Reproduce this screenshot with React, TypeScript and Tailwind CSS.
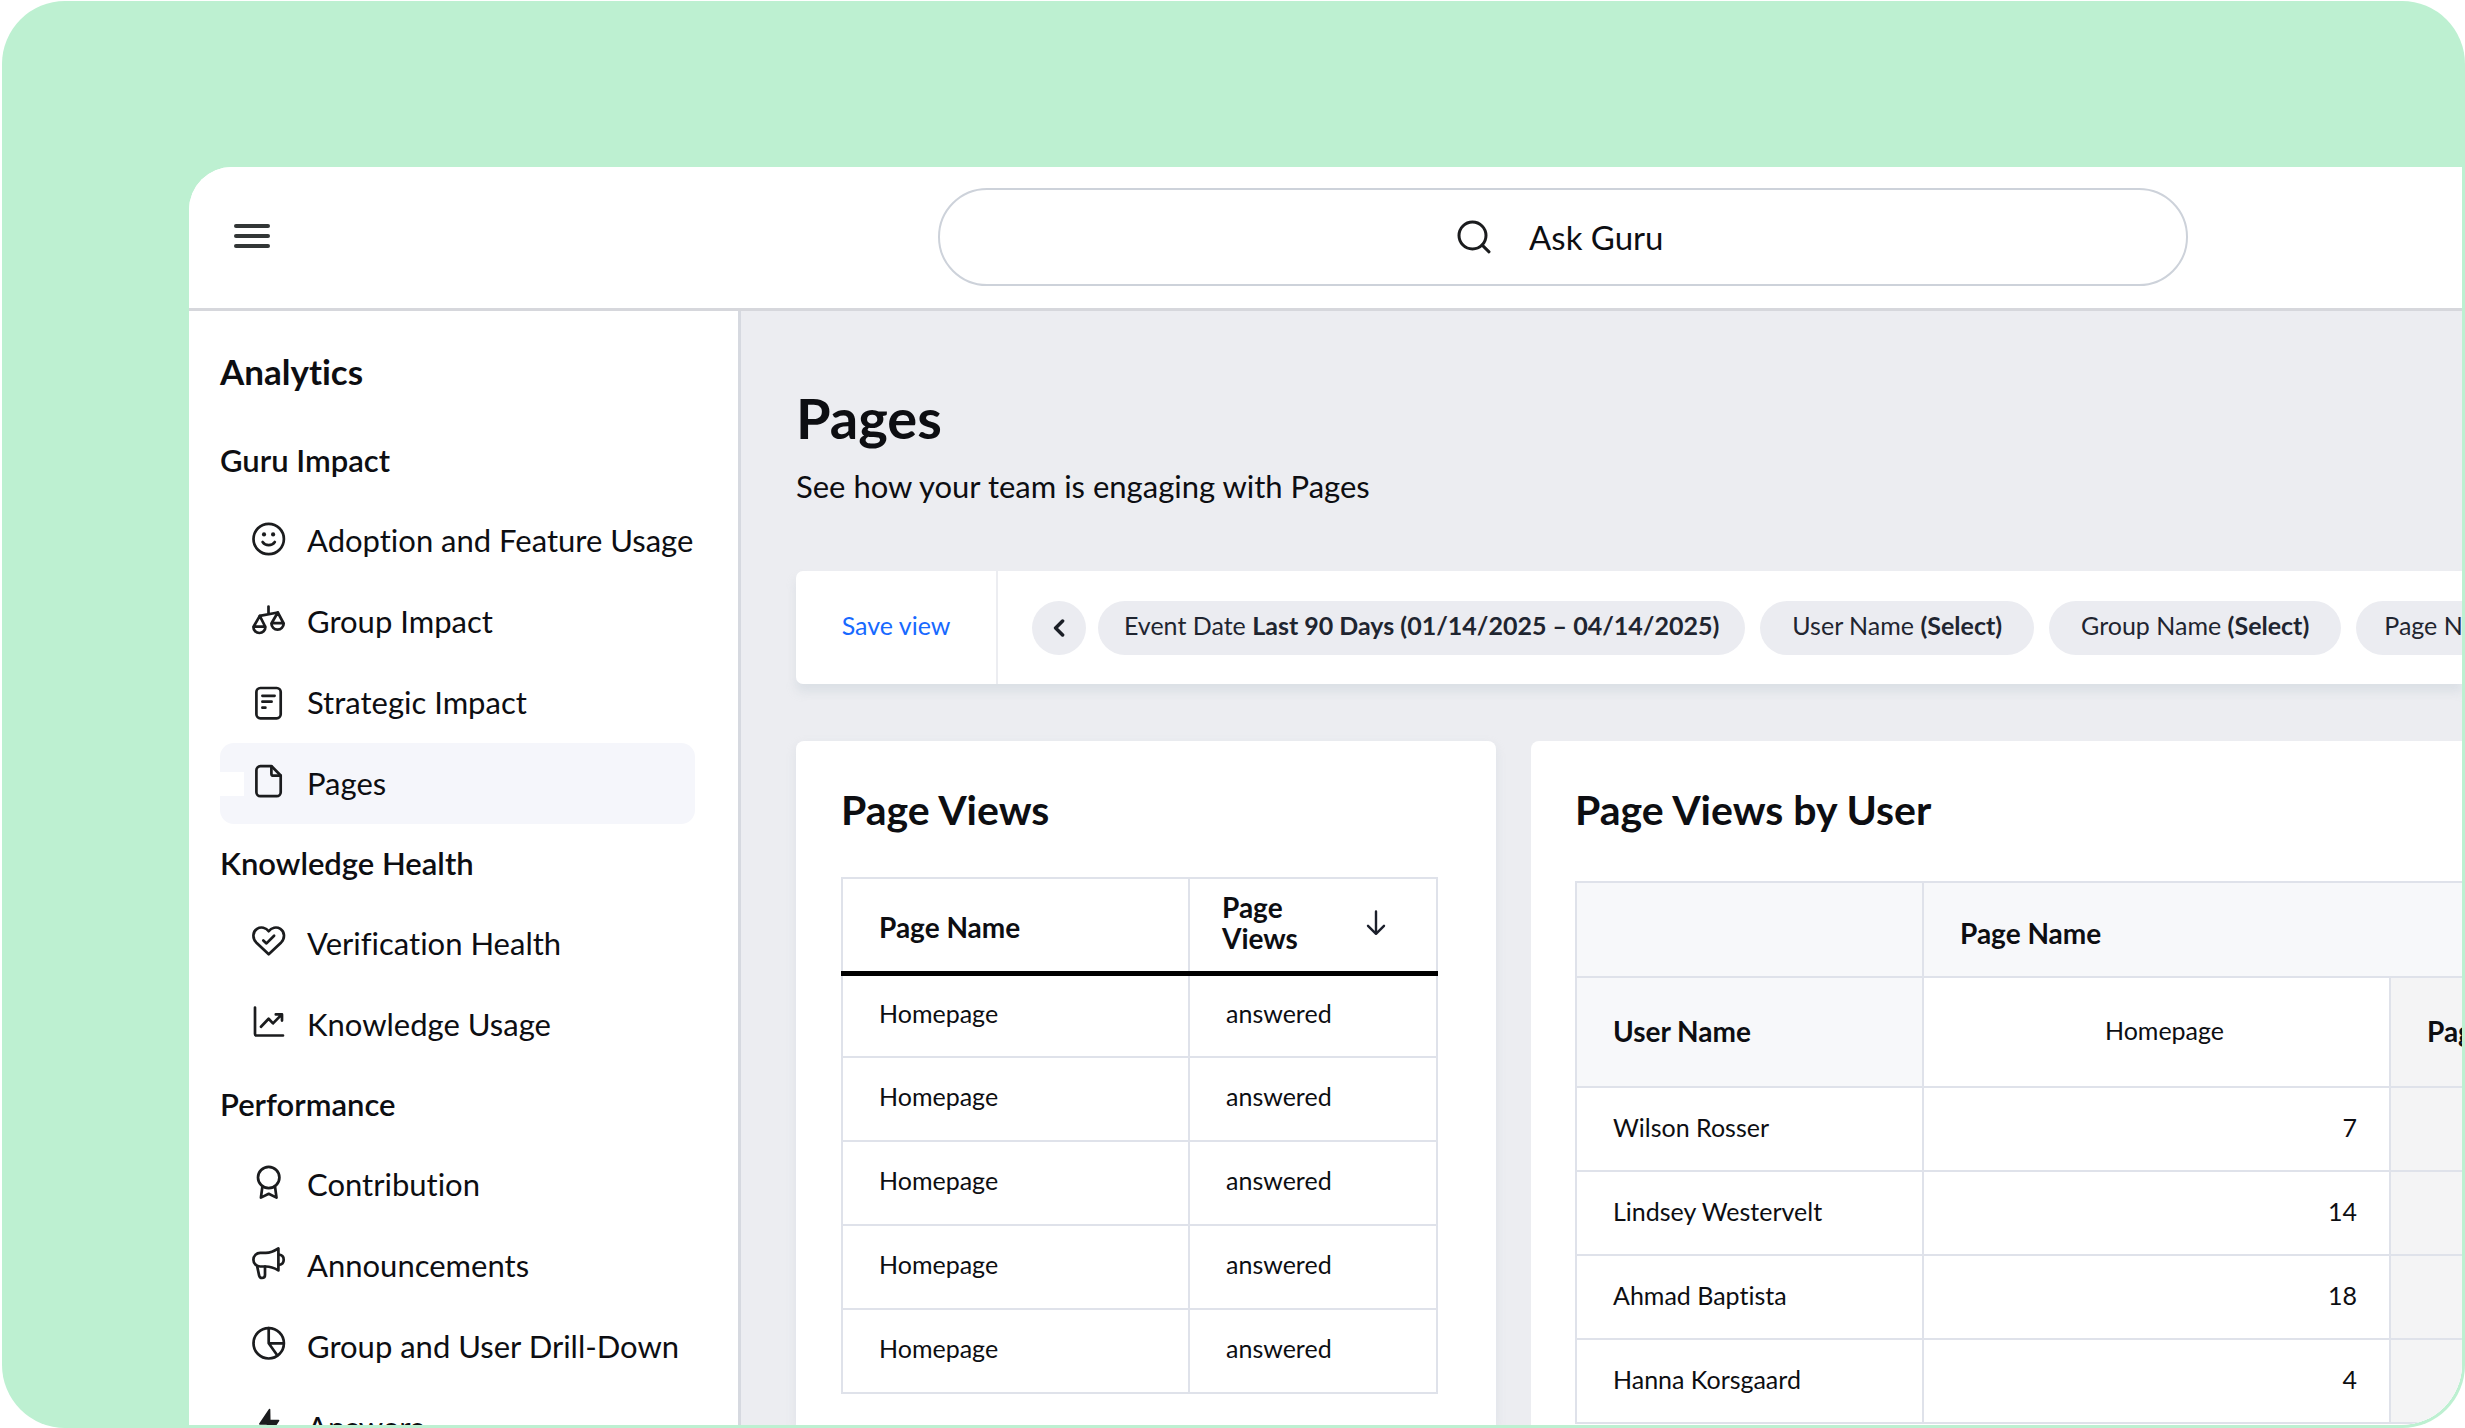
import type { ReactNode } from "react";

type NavItem = { label: string; icon: ReactNode; active?: boolean };
type NavGroup = { title: string; items: NavItem[] };

function Icon({ children }: { children: ReactNode }) {
  return (
    <svg
      viewBox="0 0 36 36"
      className="size-9 shrink-0 overflow-visible"
      fill="none"
      stroke="#1b1c1e"
      strokeWidth="2.7"
      strokeLinecap="round"
      strokeLinejoin="round"
      aria-hidden="true"
    >
      {children}
    </svg>
  );
}

const smiley = (
  <Icon>
    <circle cx="17.7" cy="18" r="15.2" />
    <circle cx="13" cy="13.4" r="2.1" fill="#1b1c1e" stroke="none" />
    <circle cx="22.1" cy="13.4" r="2.1" fill="#1b1c1e" stroke="none" />
    <path d="M11.6 21c1.4 2.1 3.6 3.2 6.1 3.2s4.7-1.1 6.1-3.2" />
  </Icon>
);

const scales = (
  <Icon>
    <path d="M17.5 4.6v7.2M8.8 13.9l18-3.4" />
    <path d="M8.8 13.9 2.4 25a6 6 0 1 0 12 0ZM2.6 24.6h11.7" />
    <path d="M26.8 10.5l-6.4 11a6.1 6.1 0 1 0 12.3 0ZM20.6 21.2h12" />
  </Icon>
);

const report = (
  <Icon>
    <rect x="5.4" y="5" width="24.3" height="30.3" rx="4" />
    <path d="M11.4 12.8h12.2M11.4 18.7h9.2M11.4 24.7h3" />
  </Icon>
);

const page = (
  <Icon>
    <path d="M9.4 2.2h11.2l9.1 9.3v16.7a4 4 0 0 1-4 4H9.4a4 4 0 0 1-4-4v-22a4 4 0 0 1 4-4Z" />
    <path d="M20.4 2.4v7.3a2 2 0 0 0 2 2h7.2" />
  </Icon>
);

const heart = (
  <Icon>
    <path d="M17.7 30.3 5.2 18.4C1.2 14.4 1.6 7.6 6 4.8c4-2.4 9-1.3 11.7 2.4 2.7-3.7 7.7-4.8 11.7-2.4 4.4 2.8 4.8 9.6.8 13.6Z" />
    <path d="m12.3 16.4 3.2 3 7.6-7.6" />
  </Icon>
);

const trend = (
  <Icon>
    <path d="M4 2.6v26.4a1.5 1.5 0 0 0 1.5 1.5H32" />
    <path d="m10 21.8 7.6-8 4.4 4.6 8.6-8.8M24.8 9.4H31v6.2" />
  </Icon>
);

const award = (
  <Icon>
    <circle cx="17.7" cy="12.5" r="10.7" />
    <path d="M11.3 22.2 9.9 32.6l7.8-3.8 7.8 3.8-1.4-10.4" />
  </Icon>
);

const megaphone = (
  <Icon>
    <path d="M9.2 6.9h5.6c4.8 0 8.7-1.9 12.6-4.5v22c-3.9-2.3-7.8-3.9-12.6-3.9H9.2a6.8 6.8 0 0 1 0-13.6Z" />
    <path d="M28 8.6c3 .3 4.7 2.5 4.7 5.1s-1.7 4.8-4.7 5.1" />
    <path d="m6.2 20.4 1.9 9c.4 1.7 1.4 2.6 2.9 2.6 1.8 0 3-1.2 3-3v-8.4" />
  </Icon>
);

const pie = (
  <Icon>
    <circle cx="17.7" cy="16.3" r="15.2" />
    <path d="M17.7 1.2v15.1h15M17.7 16.3l8.7 12.2" />
  </Icon>
);

const bolt = (
  <Icon>
    <path d="M18.6 1.5 8.8 16h7.7l-.8 14.5L27.6 12.6h-8.8Z" fill="#1b1c1e" strokeWidth="1.5" />
  </Icon>
);

const groups: NavGroup[] = [
  {
    title: "Guru Impact",
    items: [
      { label: "Adoption and Feature Usage", icon: smiley },
      { label: "Group Impact", icon: scales },
      { label: "Strategic Impact", icon: report },
      { label: "Pages", icon: page, active: true },
    ],
  },
  {
    title: "Knowledge Health",
    items: [
      { label: "Verification Health", icon: heart },
      { label: "Knowledge Usage", icon: trend },
    ],
  },
  {
    title: "Performance",
    items: [
      { label: "Contribution", icon: award },
      { label: "Announcements", icon: megaphone },
      { label: "Group and User Drill-Down", icon: pie },
      { label: "Answers", icon: bolt },
    ],
  },
];

const filters = [
  { name: "Event Date", value: "Last 90 Days (01/14/2025 – 04/14/2025)", padding: "px-[26px]" },
  { name: "User Name", value: "(Select)", padding: "px-8" },
  { name: "Group Name", value: "(Select)", padding: "px-8" },
  { name: "Page Name", value: "(Select)", padding: "px-7" },
];

const pageViews = [1, 2, 3, 4, 5].map((id) => ({ id, name: "Homepage", views: "answered" }));

const users = [
  { name: "Wilson Rosser", views: 7 },
  { name: "Lindsey Westervelt", views: 14 },
  { name: "Ahmad Baptista", views: 18 },
  { name: "Hanna Korsgaard", views: 4 },
];

function Header() {
  return (
    <header className="flex h-[144px] shrink-0 items-center border-b-3 border-[#d6d7dc] bg-white pr-[274px] pb-[2px] pl-[45px]">
      <button type="button" aria-label="Menu" className="flex w-9 shrink-0 flex-col gap-[6px] pb-[2px]">
        <span className="h-1 w-full rounded-sm bg-[#323636]" />
        <span className="h-1 w-full rounded-sm bg-[#323636]" />
        <span className="h-1 w-full rounded-sm bg-[#323636]" />
      </button>
      <label className="ml-[668px] flex h-[98px] flex-1 items-center justify-center gap-[38px] rounded-full border-2 border-[#cdd2da]">
        <svg
          viewBox="0 0 34 34"
          className="size-[34px] shrink-0"
          fill="none"
          stroke="#1b1c1e"
          strokeWidth="3"
          strokeLinecap="round"
          aria-hidden="true"
        >
          <circle cx="15.5" cy="15.5" r="13.5" />
          <path d="m25.2 25.2 6.8 6.6" />
        </svg>
        <input
          type="text"
          aria-label="Ask Guru"
          placeholder="Ask Guru"
          className="w-[140px] bg-transparent text-[33px] leading-10 text-[#0d0e12] outline-none placeholder:text-[#0d0e12]"
        />
      </label>
    </header>
  );
}

function Sidebar() {
  return (
    <nav className="w-[552px] shrink-0 overflow-hidden border-r-3 border-[#d6d9e0] bg-white pt-10 pr-[43px] pl-[31px]">
      <h2 className="mb-[30px] text-[35px] leading-10 font-bold">Analytics</h2>
      {groups.map((group) => (
        <section key={group.title}>
          <h3 className="flex h-[79px] items-center text-[31px] font-semibold">{group.title}</h3>
          <ul>
            {group.items.map((item) => (
              <li key={item.label}>
                <a
                  href="#"
                  aria-current={item.active ? "page" : undefined}
                  className={
                    item.active
                      ? "flex h-[81px] items-center rounded-[14px] bg-[#f5f6fb]"
                      : "flex h-[81px] items-center"
                  }
                >
                  <span className={item.active ? "h-6 w-6 shrink-0 bg-white" : "w-6 shrink-0"} />
                  <span className="ml-[7px] pb-1">{item.icon}</span>
                  <span className="ml-5 text-[31px] whitespace-nowrap">{item.label}</span>
                </a>
              </li>
            ))}
          </ul>
        </section>
      ))}
    </nav>
  );
}

function FilterBar() {
  return (
    <div className="mt-[65px] flex h-[113px] shrink-0 rounded-l-[7px] bg-white shadow-[0_8px_10px_rgba(190,200,210,0.35)]">
      <button
        type="button"
        className="w-[202px] shrink-0 border-r-2 border-[#ecedf1] pb-1 text-[25px] text-[#1769ff]"
      >
        Save view
      </button>
      <div className="flex min-w-0 flex-1 items-center overflow-hidden pl-[34px]">
        <button
          type="button"
          aria-label="Scroll filters back"
          className="mr-3 flex size-[54px] shrink-0 items-center justify-center rounded-full bg-[#ebecf1]"
        >
          <svg
            viewBox="0 0 12 18"
            className="h-[18px] w-3"
            fill="none"
            stroke="#1b1f27"
            strokeWidth="3.5"
            strokeLinecap="round"
            strokeLinejoin="round"
            aria-hidden="true"
          >
            <path d="M9.6 2 2.6 9l7 7" />
          </svg>
        </button>
        <div className="flex gap-[15px]">
          {filters.map((filter) => (
            <button
              key={filter.name}
              type="button"
              className={`h-[54px] shrink-0 rounded-full bg-[#ebecf1] pb-1 text-[25px] whitespace-nowrap text-[#1f2530] ${filter.padding}`}
            >
              {filter.name} <b className="font-bold">{filter.value}</b>
            </button>
          ))}
        </div>
      </div>
    </div>
  );
}

function PageViewsCard() {
  return (
    <section className="w-[700px] shrink-0 rounded-t-lg bg-white px-[45px] pt-[45px] shadow-[0_4px_10px_rgba(190,200,210,0.3)]">
      <h2 className="text-[41px] leading-12 font-bold">Page Views</h2>
      <table className="mt-[43px] w-[597px] table-fixed border-collapse border-2 border-[#dfe2ea] text-left">
        <thead>
          <tr className="h-[95px] border-b-5 border-black">
            <th scope="col" className="w-[347px] pt-1 pl-9 text-[28px] font-bold">
              Page Name
            </th>
            <th scope="col" className="border-l-2 border-l-[#dfe2ea] pr-[50px] pl-8">
              <button type="button" className="flex w-full items-center justify-between pb-1 text-left">
                <span className="w-20 text-[28px] leading-[31px] font-bold">Page Views</span>
                <svg
                  viewBox="0 0 20 26"
                  className="h-[26px] w-5"
                  fill="none"
                  stroke="#1b1f2b"
                  strokeWidth="2.4"
                  strokeLinecap="round"
                  strokeLinejoin="round"
                  aria-hidden="true"
                >
                  <path d="M10 1.5v22M2 15.8l8 8 8-8" />
                </svg>
              </button>
            </th>
          </tr>
        </thead>
        <tbody>
          {pageViews.map((row) => (
            <tr key={row.id} className="h-[84px] border-b-2 border-[#dfe2ea]">
              <td className="pb-1 pl-9 text-[25px]">{row.name}</td>
              <td className="border-l-2 border-[#dfe2ea] pb-1 pl-9 text-[25px]">{row.views}</td>
            </tr>
          ))}
        </tbody>
      </table>
    </section>
  );
}

function PageViewsByUserCard() {
  return (
    <section className="min-w-0 flex-1 overflow-hidden rounded-tl-lg bg-white pt-[45px] pl-11">
      <h2 className="text-[41px] leading-12 font-bold">Page Views by User</h2>
      <table className="mt-[47px] w-full table-fixed border-collapse text-left">
        <colgroup>
          <col className="w-[347px]" />
          <col className="w-[467px]" />
          <col />
        </colgroup>
        <thead className="text-[28px]">
          <tr className="h-[95px] border-y-2 border-[#dfe2ea] bg-[#f7f8fa]">
            <td className="border-l-2 border-[#dfe2ea]" />
            <th scope="colgroup" colSpan={2} className="border-l-2 border-[#dfe2ea] pt-[6px] pl-9 font-bold">
              Page Name
            </th>
          </tr>
          <tr className="h-[110px] border-b-2 border-[#dfe2ea]">
            <th scope="col" className="border-l-2 border-[#dfe2ea] bg-[#f7f8fa] pb-[2px] pl-9 font-bold">
              User Name
            </th>
            <th scope="col" className="border-l-2 border-[#dfe2ea] pb-[2px] pl-4 text-center text-[25px] font-normal">
              Homepage
            </th>
            <th
              scope="col"
              className="overflow-hidden border-l-2 border-[#dfe2ea] bg-[#f4f4f5] pb-[2px] pl-9 font-bold whitespace-nowrap"
            >
              Page Views
            </th>
          </tr>
        </thead>
        <tbody className="text-[25px]">
          {users.map((user) => (
            <tr key={user.name} className="h-[84px] border-b-2 border-[#dfe2ea]">
              <td className="border-l-2 border-[#dfe2ea] pb-[2px] pl-9">{user.name}</td>
              <td className="border-l-2 border-[#dfe2ea] pr-8 pb-[2px] text-right">{user.views}</td>
              <td className="border-l-2 border-[#dfe2ea] bg-[#f4f4f5]" />
            </tr>
          ))}
        </tbody>
      </table>
    </section>
  );
}

export default function App() {
  return (
    <div className="h-screen overflow-hidden bg-white pt-px pl-[2px] font-['Lato',sans-serif] text-[#0d0e12] [font-variant-ligatures:none]">
      <div className="h-full overflow-hidden rounded-[63px] bg-[#bdf0d1] pt-[166px] pr-[3px] pb-[3px] pl-[187px]">
        <div className="flex h-full flex-col overflow-hidden rounded-tl-[43px] rounded-br-[61px] bg-white">
          <Header />
          <div className="flex min-h-0 flex-1">
            <Sidebar />
            <main className="flex min-w-0 flex-1 flex-col overflow-hidden bg-[#ecedf1] pt-[75px] pl-[55px]">
              <h1 className="text-[56px] leading-16 font-bold">Pages</h1>
              <p className="mt-4 text-[31px] leading-10">See how your team is engaging with Pages</p>
              <FilterBar />
              <div className="mt-[57px] flex min-h-0 flex-1 gap-[35px]">
                <PageViewsCard />
                <PageViewsByUserCard />
              </div>
            </main>
          </div>
        </div>
      </div>
    </div>
  );
}
